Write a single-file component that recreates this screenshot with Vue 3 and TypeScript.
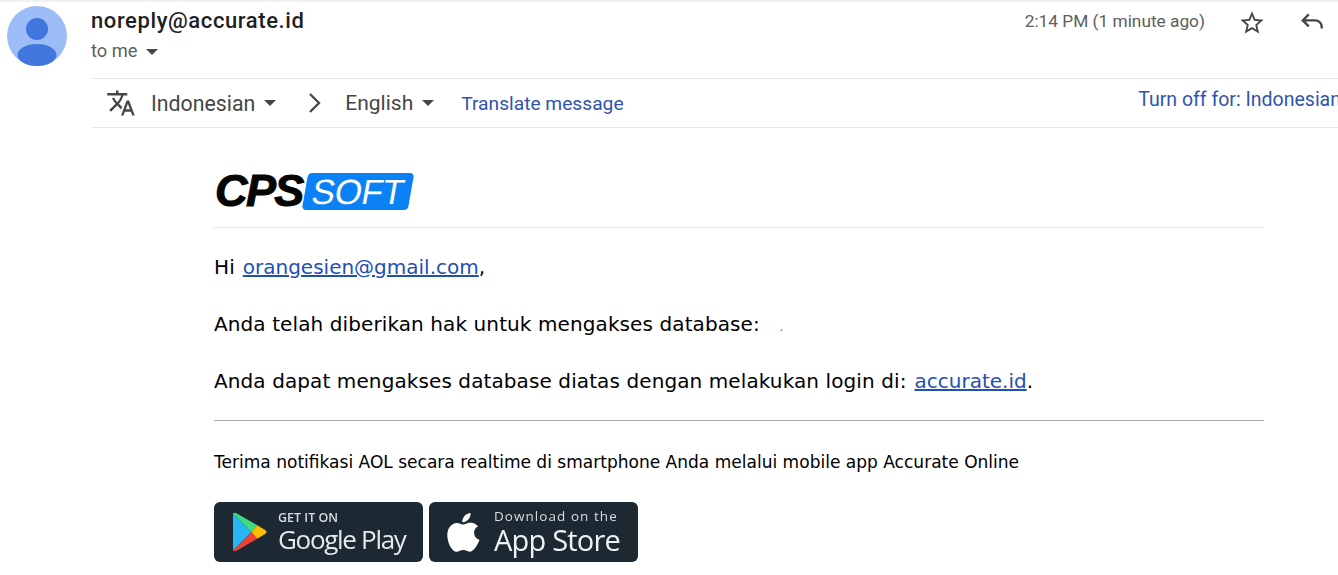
<script setup lang="ts">
const sender = "noreply@accurate.id";
const recipient = "orangesien@gmail.com";
</script>

<template>
  <div class="page">
    <header class="head">
      <svg class="avatar" viewBox="0 0 60 60" aria-hidden="true">
        <circle cx="30" cy="30" r="30" fill="#9dbdf8" />
        <circle cx="30" cy="23" r="11" fill="#4176de" />
        <ellipse cx="30" cy="49" rx="19.5" ry="11" fill="#4176de" />
      </svg>
      <div class="head-main">
        <div class="meta">
          <div class="who">
            <div class="sender">{{ sender }}</div>
            <div class="to">to me <span class="caret"></span></div>
          </div>
          <div class="when">2:14 PM (1 minute ago)</div>
          <svg class="star" viewBox="0 0 24 24" aria-hidden="true">
            <path d="M22 9.24l-7.19-.62L12 2 9.19 8.63 2 9.24l5.46 4.73L5.82 21 12 17.27 18.18 21l-1.63-7.03L22 9.24zM12 15.4l-3.76 2.27 1-4.28-3.32-2.88 4.38-.38L12 6.1l1.71 4.04 4.38.38-3.32 2.88 1 4.28L12 15.4z" fill="#444746" />
          </svg>
          <svg class="reply" viewBox="0 0 24 24" aria-hidden="true">
            <path d="M9 6.500 3.500 12 9 17.500M4 12h11a6 6 0 0 1 6 6v1.500" transform="translate(0 -1.5)" fill="none" stroke="#444746" stroke-width="2.2" />
          </svg>
        </div>
        <div class="translate">
          <svg class="tr-icon" viewBox="0 0 24 24" aria-hidden="true">
            <path d="m12.87 15.07-2.54-2.51.03-.03A17.5 17.5 0 0 0 14.07 6H17V4h-7V2H8v2H1v1.99h11.17C11.5 7.92 10.44 9.75 9 11.35 8.07 10.32 7.3 9.19 6.69 8h-2c.73 1.63 1.73 3.17 2.98 4.56l-5.09 5.02L4 19l5-5 3.11 3.11.76-2.04zM18.5 10h-2L12 22h2l1.12-3h4.75L21 22h2l-4.5-12zm-2.62 7 1.62-4.33L19.12 17h-3.24z" fill="#444746" />
          </svg>
          <span class="lang">Indonesian</span><span class="caret lang-caret"></span>
          <svg class="chev" viewBox="0 0 14 22" aria-hidden="true">
            <path d="M3 2 12 11 3 20" fill="none" stroke="#444746" stroke-width="2.3" />
          </svg>
          <span class="lang english">English</span><span class="caret lang-caret"></span>
          <a class="tr-link">Translate message</a>
          <a class="tr-off">Turn off for: Indonesian</a>
        </div>
      </div>
    </header>

    <main class="mail">
      <div class="logo-row">
        <div class="logo">
          <span class="cps">CPS</span>
          <span class="soft"><span class="soft-text">SOFT</span></span>
        </div>
      </div>
      <p class="line first">Hi <a class="mail-link">{{ recipient }}</a>,</p>
      <p class="line">Anda telah diberikan hak untuk mengakses database: <span class="dot">.</span></p>
      <p class="line">Anda dapat mengakses database diatas dengan melakukan login di: <a class="mail-link">accurate.id</a>.</p>
      <hr class="rule" />
      <p class="note">Terima notifikasi AOL secara realtime di smartphone Anda melalui mobile app Accurate Online</p>
      <div class="badges">
        <div class="badge play">
          <svg class="play-icon" viewBox="0 0 36 40" aria-hidden="true">
            <path d="M1 1 20 20 1 39Z" fill="#29b6f6" />
            <path d="M1 1C2 0 3 0 5 1L26 13 20 20Z" fill="#3ddc84" />
            <path d="M1 39C2 40 3 40 5 39L26 27 20 20Z" fill="#ea4335" />
            <path d="M26 13 34 18C36 19 36 21 34 22L26 27 20 20Z" fill="#fbbc04" />
          </svg>
          <div class="play-copy">
            <span class="play-small">GET IT ON</span>
            <span class="play-big">Google Play</span>
          </div>
        </div>
        <div class="badge store">
          <svg class="apple" viewBox="0 0 34 40" aria-hidden="true">
            <path d="M23.5 1c.2 2.6-.8 4.9-2.2 6.5-1.500 1.700-3.800 3-6 2.800-.3-2.400.9-4.900 2.200-6.400C19 2.300 21.500 1.100 23.500 1zM31 14.200c-2.600 1.600-4 3.900-3.900 6.700.1 3.300 2 5.700 5.400 7.100-.8 2.300-1.900 4.500-3.300 6.500-1.900 2.700-3.800 5.200-6.500 5.200-2.600 0-3.400-1.600-6.500-1.600-3 0-4 1.600-6.500 1.700-2.600.1-4.600-2.800-6.500-5.400C.4 29.300-1.300 20.400 2.500 15.200c1.800-2.600 4.600-4.200 7.400-4.300 2.500 0 4.800 1.700 6.400 1.700s4.200-2.100 7.100-1.800c1.300 0 5 .5 7.600 3.400z" fill="#fff" />
          </svg>
          <div class="store-copy">
            <span class="store-small">Download on the</span>
            <span class="store-big">App Store</span>
          </div>
        </div>
      </div>
    </main>
  </div>
</template>

<style>
html,
body {
  margin: 0;
  background: #fff;
  overflow: hidden;
}
</style>

<style scoped>
.page {
  width: 1338px;
  height: 575px;
  overflow: hidden;
  box-sizing: border-box;
  border-top: 2px solid #f1f1f1;
  font-family: Roboto, "Liberation Sans", sans-serif;
  color: #000;
}

.head {
  display: flex;
  padding: 4px 0 0 7px;
}

.avatar {
  width: 60px;
  height: 60px;
  flex: none;
  margin-right: 24px;
}

.head-main {
  flex: 1;
  min-width: 0;
}

.meta {
  display: flex;
  height: 73px;
  box-sizing: border-box;
  border-bottom: 1px solid #e9e9e9;
}

.who {
  flex: 1;
}

.sender {
  font-size: 22px;
  font-weight: 500;
  letter-spacing: 0.6px;
  line-height: 29px;
  color: #1f1f1f;
}

.to {
  font-size: 18.3px;
  line-height: 31px;
  color: #5e5e5e;
}

.caret {
  display: inline-block;
  width: 0;
  height: 0;
  margin-left: 4px;
  border-left: 6px solid transparent;
  border-right: 6px solid transparent;
  border-top: 6px solid #444746;
  vertical-align: middle;
}

.when {
  font-size: 17.3px;
  line-height: 30px;
  color: #5e5e5e;
  margin-right: 32px;
}

.star {
  width: 28px;
  height: 28px;
  margin: 3px 0 0 1px;
}

.reply {
  width: 26px;
  height: 26px;
  margin: 3px 13px 0 33px;
  flex: none;
}

.translate {
  display: flex;
  align-items: center;
  height: 49px;
  box-sizing: border-box;
  border-bottom: 1px solid #e9e9e9;
  padding-left: 15px;
  white-space: nowrap;
}

.tr-icon {
  width: 30px;
  height: 30px;
  flex: none;
  margin-right: 15px;
}

.lang {
  font-size: 21.3px;
  color: #444746;
}

.lang-caret {
  margin-left: 9px;
}

.chev {
  width: 14px;
  height: 22px;
  flex: none;
  margin: 0 24px 0 31px;
}

.english {
  font-size: 21px;
}

.tr-link {
  font-size: 19.2px;
  color: #2f54ad;
  margin-left: 27px;
}

.tr-off {
  font-size: 19.5px;
  color: #2f54ad;
  margin-left: auto;
  margin-right: -3px;
  padding-bottom: 8px;
}

.mail {
  margin-left: 214px;
  width: 1050px;
  font-family: "DejaVu Sans", Verdana, sans-serif;
}

.logo-row {
  height: 100px;
  box-sizing: border-box;
  border-bottom: 1px solid #e6e6e6;
  padding: 44px 0 0 1px;
}

.logo {
  display: flex;
  align-items: center;
  height: 38px;
}

.cps {
  font-family: "Liberation Sans", Arial, sans-serif;
  font-weight: 700;
  font-style: italic;
  font-size: 45px;
  line-height: 38px;
  letter-spacing: -1.6px;
  color: #050505;
  -webkit-text-stroke: 1px #050505;
}

.soft {
  display: block;
  margin-left: 2px;
  width: 106px;
  height: 37px;
  background: #0a82f5;
  border-radius: 4px;
  transform: skewX(-10deg);
  text-align: center;
}

.soft-text {
  display: block;
  font-family: "Liberation Sans", Arial, sans-serif;
  font-size: 35px;
  line-height: 37px;
  color: #fff;
  letter-spacing: -0.5px;
}

.line {
  margin: 0;
  font-size: 20px;
  letter-spacing: 0.1px;
  line-height: 57px;
  color: #000;
}

.first {
  margin-top: 11px;
}

.mail-link {
  color: #1f50b4;
  text-decoration: underline;
  letter-spacing: 0;
  margin-left: 1.5px;
}

.dot {
  margin-left: 13px;
  font-size: 13px;
  line-height: 0;
  color: #777;
}

.rule {
  margin: 10px 0 0;
  border: 0;
  border-top: 1px solid #a9a9a9;
}

.note {
  margin: 29px 0 0;
  font-size: 17.05px;
  line-height: 24px;
  color: #000;
}

.badges {
  display: flex;
  gap: 6px;
  margin-top: 28px;
}

.badge {
  height: 60px;
  border-radius: 6px;
  background: #1c2832;
  display: flex;
  align-items: center;
  box-sizing: border-box;
  color: #fff;
  font-family: "Open Sans", "Liberation Sans", sans-serif;
  filter: blur(0.4px);
}

.play {
  width: 209px;
  padding-left: 18px;
}

.play-icon {
  width: 35px;
  height: 40px;
  flex: none;
  margin-right: 11px;
}

.play-copy,
.store-copy {
  display: flex;
  flex-direction: column;
}

.play-small {
  font-size: 12.5px;
  line-height: 15px;
  font-weight: 600;
  color: #d8dcdf;
}

.play-big {
  font-size: 26px;
  line-height: 29px;
  letter-spacing: -1.3px;
  color: #e6e8ea;
}

.store {
  width: 209px;
  padding-left: 18px;
}

.apple {
  width: 34px;
  height: 40px;
  flex: none;
  margin-right: 13px;
}

.store-small {
  font-size: 13.5px;
  line-height: 16px;
  letter-spacing: 1.05px;
  color: #d8dcdf;
}

.store-big {
  font-size: 29px;
  line-height: 32px;
  letter-spacing: -0.8px;
  color: #f0f1f2;
}
</style>
